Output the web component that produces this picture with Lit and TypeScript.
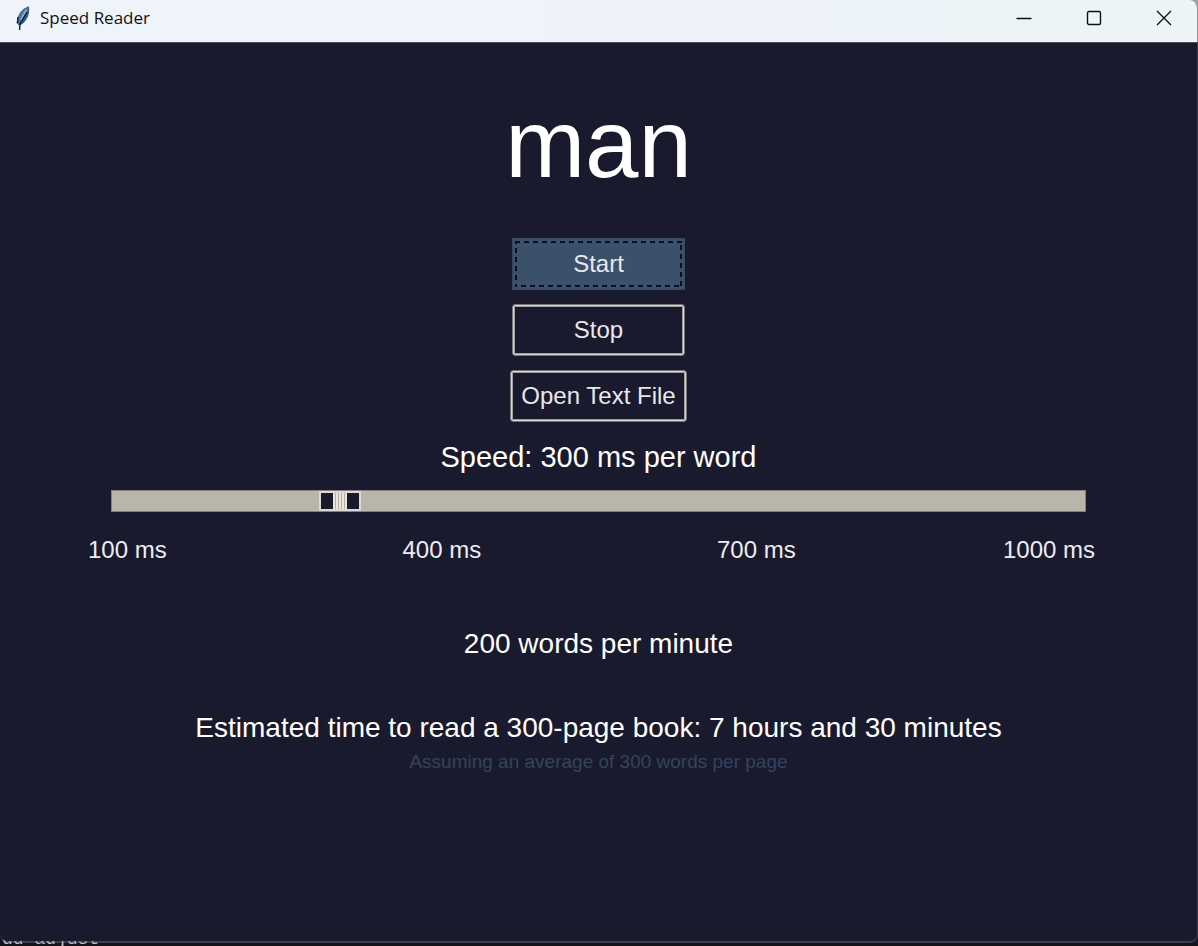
import { LitElement, html, css } from "lit";
import { customElement, state } from "lit/decorators.js";

@customElement("app-root")
export class AppRoot extends LitElement {
  @state() private delay = 300;

  static styles = css`
    :host {
      display: block;
      background: #14141f;
      color: #ffffff;
      font-family: "Liberation Sans", Arial, sans-serif;
    }
    * {
      box-sizing: border-box;
    }
    .screen {
      position: relative;
      display: flex;
      flex-direction: column;
      min-height: 100vh;
      padding-bottom: 3px;
      overflow: hidden;
      background: linear-gradient(#a0a0a4 0 42px, #14141f 42px);
    }
    .window {
      position: relative;
      flex: 1;
      display: flex;
      flex-direction: column;
      border-bottom: 2px solid rgba(120, 120, 132, 0.4);
      border-right: 1px solid rgba(120, 120, 132, 0.4);
      border-radius: 0 8px 8px 8px;
      overflow: hidden;
      background: #1a1a2e;
      background-clip: padding-box;
    }
    .behind {
      position: absolute;
      left: 2px;
      bottom: -2px;
      margin: 0;
      font: 18px/18px "Liberation Mono", monospace;
      color: #c4c4c4;
    }
    .titlebar {
      display: flex;
      align-items: center;
      height: 43px;
      margin-right: -2px;
      padding: 0 0 6px 15px;
      border-bottom: 1px solid #50505c;
      background: linear-gradient(90deg, #eff3fa, #eff3fb 45%, #ecf4f8 80%);
      color: #111111;
    }
    .feather {
      width: 16px;
      height: 26px;
    }
    .name {
      flex: 1;
      margin: 0 0 0 9px;
      font: 400 17px/24px "Open Sans", "Noto Sans", sans-serif;
    }
    .caption {
      display: grid;
      place-items: center;
      width: 70px;
      height: 36px;
      padding: 0;
      border: 0;
      background: none;
      color: #111111;
    }
    .caption svg {
      width: 16px;
      height: 16px;
      fill: none;
      stroke: currentColor;
      stroke-width: 1.4;
    }
    .content {
      display: flex;
      flex-direction: column;
      align-items: center;
      padding-top: 45px;
    }
    .word {
      margin: 0 0 38px;
      font-size: 96px;
      line-height: 112px;
    }
    .actions {
      display: flex;
      flex-direction: column;
      align-items: center;
      gap: 14px;
    }
    .action {
      min-width: 173px;
      height: 52px;
      padding: 0 10px;
      border: 1px solid #77747a;
      border-radius: 3px;
      box-shadow: inset 0 0 0 1px #d9d5ce, inset 0 0 0 2px #a29e9e;
      background: #1a1a2e;
      color: #e8e8ea;
      font: 24px/28px "Liberation Sans", Arial, sans-serif;
    }
    .action.active {
      position: relative;
      border-color: #36485f;
      border-radius: 0;
      box-shadow: none;
      background: #3b506b;
    }
    .focus {
      position: absolute;
      inset: 2px;
      width: calc(100% - 4px);
      height: calc(100% - 4px);
      fill: none;
      stroke: #0c0f16;
      stroke-width: 4;
      stroke-dasharray: 5 4;
    }
    .line {
      margin: 0;
      font-size: 28px;
      line-height: 34px;
    }
    .speed {
      margin: 18px 0 16px;
      font-size: 29px;
    }
    .slider {
      appearance: none;
      display: block;
      width: calc(100% - 222px);
      height: 22px;
      margin: 0;
      border: 1px solid #86827f;
      background: #b9b5a9;
    }
    .slider::-webkit-slider-thumb {
      appearance: none;
      width: 42px;
      height: 20px;
      border: 2px solid #dcd9d0;
      background:
        linear-gradient(#1a1a2e, #1a1a2e) left / 12px 100% no-repeat,
        linear-gradient(#1a1a2e, #1a1a2e) right / 12px 100% no-repeat,
        repeating-linear-gradient(90deg, #e9e6de 0 2px, #b3afa5 2px 3px);
    }
    .ticks {
      display: grid;
      grid-template-columns: 11fr 11fr 10fr auto;
      align-self: stretch;
      margin: 24px 102px 63px 88px;
      color: #ededf0;
      font-size: 24px;
      line-height: 28px;
    }
    .rate {
      margin-bottom: 50px;
    }
    .note {
      margin: 5px 0 0;
      color: #33445c;
      font-size: 19px;
      line-height: 24px;
    }
  `;

  private onInput(e: Event) {
    this.delay = Number((e.target as HTMLInputElement).value);
  }

  private get estimate() {
    const minutes = Math.round((300 * 300 * this.delay) / 60000);
    return `${Math.floor(minutes / 60)} hours and ${minutes % 60} minutes`;
  }

  render() {
    return html`
      <div class="screen">
        <p class="behind" aria-hidden="true">dd-adjust</p>
        <div class="window">
          <header class="titlebar">
            <svg class="feather" viewBox="0 0 16 26" aria-hidden="true">
              <path d="M13.500 2C8 3.500 3 9 2.300 18L4.500 20C10 17.500 14.500 11 13.500 2Z" fill="#3f7fc4" stroke="#5a636e" stroke-width="1.200" />
              <path d="M13.500 3C14 10 11 16 6 19L9 11Z" fill="#2a5c94" />
              <path d="M11.500 5L6 15" stroke="#7fb5ec" stroke-width="1.800" />
              <path d="M12 7L5 19L4.500 25M3 12L2.500 18" stroke="#17191d" stroke-width="1.400" fill="none" />
            </svg>
            <h1 class="name">Speed Reader</h1>
            <button class="caption" aria-label="Minimize">
              <svg viewBox="0 0 16 16"><path d="M.5 8.500H15.500" /></svg>
            </button>
            <button class="caption" aria-label="Maximize">
              <svg viewBox="0 0 16 16"><rect x="1.500" y="1.500" width="13" height="13" rx="1.500" /></svg>
            </button>
            <button class="caption" aria-label="Close">
              <svg viewBox="0 0 16 16"><path d="M1 1L15 15M15 1L1 15" /></svg>
            </button>
          </header>
          <main class="content">
            <p class="word">man</p>
            <div class="actions">
              <button class="action active">
                <svg class="focus" aria-hidden="true"><rect width="100%" height="100%" /></svg>Start
              </button>
              <button class="action">Stop</button>
              <button class="action">Open Text File</button>
            </div>
            <label class="line speed" for="delay">Speed: ${this.delay} ms per word</label>
            <input class="slider" id="delay" type="range" min="100" max="1000"
              .value=${String(this.delay)} @input=${this.onInput} />
            <div class="ticks">
              ${[100, 400, 700, 1000].map((t) => html`<span>${t} ms</span>`)}
            </div>
            <p class="line rate">${Math.round(60000 / this.delay)} words per minute</p>
            <p class="line">Estimated time to read a 300-page book: ${this.estimate}</p>
            <p class="note">Assuming an average of 300 words per page</p>
          </main>
        </div>
      </div>
    `;
  }
}
